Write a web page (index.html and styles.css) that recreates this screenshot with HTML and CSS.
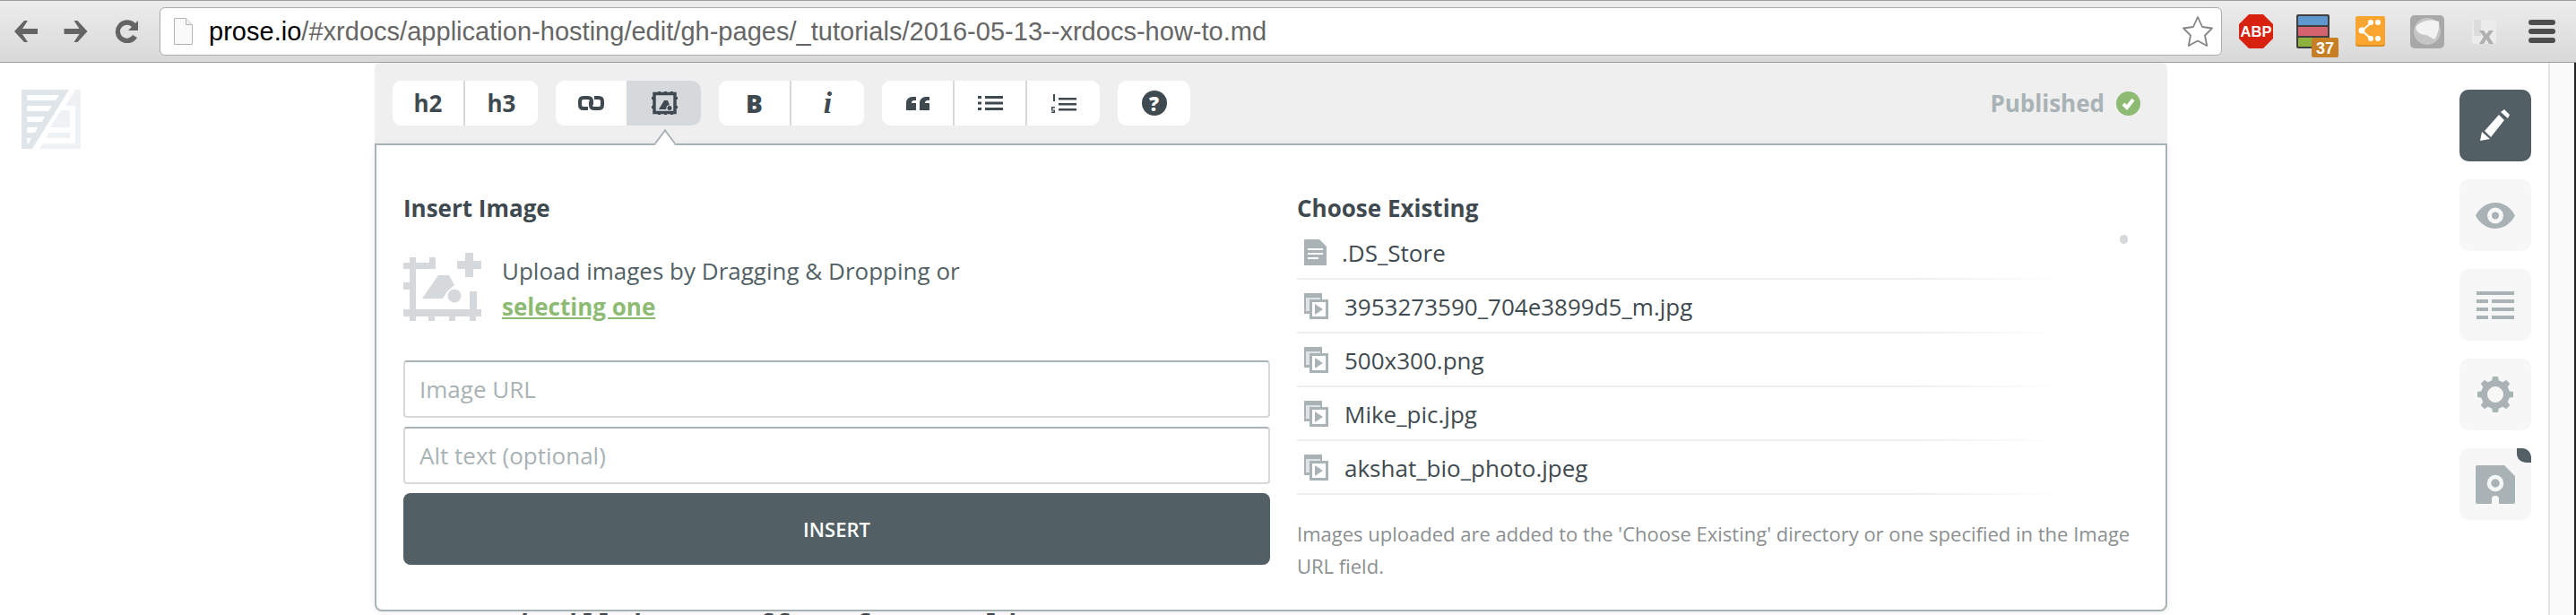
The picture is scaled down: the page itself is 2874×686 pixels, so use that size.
FILE: index.html
```html
<!DOCTYPE html>
<html>
<head>
    <meta charset="UTF-8">
    <title>Prose</title>
    <link rel="stylesheet" href="styles.css">
</head>
<body>
    <header class="browser">
        <svg class="nav nav-back" viewBox="0 0 29 26"><path d="M13 1 2 13l11 12h4l-6-9h17v-6H11l6-9z"/></svg>
        <svg class="nav nav-forward" viewBox="0 0 29 26"><path d="M16 1l11 12-11 12h-4l6-9H1v-6h17l-6-9z"/></svg>
        <svg class="nav nav-reload" viewBox="0 0 27 26"><path d="M26 1v11H15l4-4a7.500 7.500 0 1 0 1 9l5 3a13 13 0 1 1-2-16z"/></svg>
        <div class="url">
            <svg class="url-page" viewBox="0 0 21 30"><path d="M.5.500h13l7 7v22H.5z" fill="#fafafa" stroke="#b5b5b5"/><path d="M13.500.500v7h7" fill="#eee" stroke="#b5b5b5"/></svg>
            <span class="url-text"><b>prose.io</b>/#xrdocs/application-hosting/edit/gh-pages/_tutorials/2016-05-13--xrdocs-how-to.md</span>
            <svg class="url-star" viewBox="0 0 36 36"><path d="M18 2l5 11 11 1.500-8 8 2.200 11.500L18 28.500 7.800 34 10 22.500l-8-8L13 13z" fill="#fff" stroke="#858585" stroke-width="1.800" stroke-linejoin="round"/></svg>
        </div>
        <svg class="ext ext-abp" viewBox="0 0 38 38"><path d="M11 0h16l11 11v16L27 38H11L0 27V11z" fill="#d8210f"/><text x="19" y="25" text-anchor="middle" class="abp-text">ABP</text></svg>
        <svg class="ext ext-buffer" viewBox="0 0 47 48">
            <rect x="0" y="0" width="37" height="38" rx="2" fill="#3f3f3f"/>
            <rect x="2" y="2" width="33" height="10" rx="1" fill="#5f97cf"/>
            <rect x="2" y="14" width="33" height="10" rx="1" fill="#d5626f"/>
            <rect x="2" y="26" width="33" height="10" rx="1" fill="#8eb13e"/>
            <rect x="17" y="26" width="30" height="22" rx="2" fill="#c67f25"/>
            <text x="32" y="44" text-anchor="middle" class="badge-text">37</text>
        </svg>
        <svg class="ext ext-share" viewBox="0 0 33 34">
            <rect width="33" height="34" rx="3" fill="#d98c25"/>
            <rect width="33" height="32" rx="3" fill="#fba531"/>
            <path d="M17 8 7 16l10 9" fill="none" stroke="#fff" stroke-width="2"/>
            <circle cx="7" cy="16" r="3.500" fill="#fff"/>
            <circle cx="17" cy="7" r="3" fill="#fff"/><circle cx="25" cy="7" r="3" fill="#fff"/>
            <circle cx="17" cy="25" r="3" fill="#fff"/><circle cx="25" cy="25" r="3" fill="#fff"/>
        </svg>
        <svg class="ext ext-gray" viewBox="0 0 38 37">
            <rect width="38" height="37" rx="5" fill="#a8a8a8"/>
            <circle cx="19" cy="18" r="15" fill="#c5c5c5"/>
            <path d="M6 14C9 7 22 3 32 7c1 6-1 15-5 20l-9-5C12 22 7 19 6 14z" fill="#f2f2f2"/>
        </svg>
        <svg class="ext ext-x" viewBox="0 0 27 27">
            <rect width="27" height="27" rx="2" fill="#ececec"/>
            <rect x="2" y="0" width="8" height="18" fill="#dcdcdc"/>
            <path d="M8 12h5l3 4 3-4h5l-5 7 5 8h-5l-3-5-3 5H8l5-8z" fill="#b0b0b0"/>
        </svg>
        <div class="menu"><span></span><span></span><span></span></div>
    </header>

    <div class="page">
        <div class="brand">
            <svg class="logo" viewBox="0 0 66 66">
                <path fill-rule="evenodd" fill="#dfe5e8" d="M0 0h53L12 66H0zM6 6v6h32l4-6zM6 18v6h24l4-6zM6 30v6h17l3-6zM6 42v6h9l3-6zM6 54v6h2l3-6z"/>
                <path fill="#eef2f4" d="M60 0h6v66H20l4-6h36V18H49zM44 23h10v19H32zM31 48h23v6H27z"/>
            </svg>
        </div>

        <main class="editor">
            <nav class="toolbar">
                <div class="btn-group">
                    <button class="tool">h2</button>
                    <button class="tool">h3</button>
                </div>
                <div class="btn-group">
                    <button class="tool">
                        <svg class="icon" width="29" height="16" viewBox="0 0 29 16"><path d="M11 14H6q-4 0-4-4V6q0-4 4-4h5q4 0 4 4v4M18 2h5q4 0 4 4v4q0 4-4 4h-5q-4 0-4-4V6" fill="none" stroke="#3f4a50" stroke-width="4"/></svg>
                    </button>
                    <button class="tool active">
                        <svg class="icon" width="31" height="26" viewBox="0 0 31 26">
                            <path d="M4 2.500h23v21H4z" fill="none" stroke="#3f4a50" stroke-width="3.500"/>
                            <path d="M1 6h3v3H1zM1 16h3v3H1zM27 6h3v3h-3zM27 16h3v3h-3zM8 0h3v2H8zM15 0h3v2h-3zM22 0h3v2h-3zM8 24h3v2H8zM15 24h3v2h-3zM22 24h3v2h-3z" fill="#3f4a50"/>
                            <path d="M9 20l6-10h4l2 5-3 1-1 4z" fill="#3f4a50"/><circle cx="21" cy="18.500" r="2.500" fill="#3f4a50"/>
                        </svg>
                    </button>
                </div>
                <div class="btn-group">
                    <button class="tool tool-b">B</button>
                    <button class="tool tool-i">i</button>
                </div>
                <div class="btn-group">
                    <button class="tool">
                        <svg class="icon" width="26" height="15" viewBox="0 0 26 15"><path d="M0 15V7c0-4 3-7 7-7h4v4H9C7 4 6 5 6 7h5v8zM15 15V7c0-4 3-7 7-7h4v4h-2c-2 0-3 1-3 3h5v8z" fill="#3f4a50"/></svg>
                    </button>
                    <button class="tool">
                        <svg class="icon" width="28" height="16" viewBox="0 0 28 16"><path d="M0 0h4v3H0zM8 0h20v3H8zM0 6.500h4v3H0zM8 6.500h20v3H8zM0 13h4v3H0zM8 13h20v3H8z" fill="#3f4a50"/></svg>
                    </button>
                    <button class="tool">
                        <svg class="icon" width="28" height="21" viewBox="0 0 28 21"><path d="M8 4h20v2.500H8zM8 10h20v2.500H8zM8 16h20v2.500H8z" fill="#3f4a50"/><path d="M2 0h2v8H2zM0 14h4v1.500H1.500v2H4V21H0v-1.500h2.500v-1H0z" fill="#3f4a50"/></svg>
                    </button>
                </div>
                <div class="btn-group">
                    <button class="tool tool-help"><span class="help">?</span></button>
                </div>
                <div class="status">
                    <span>Published</span>
                    <svg class="status-check" viewBox="0 0 27 27"><circle cx="13.500" cy="13.500" r="13.500" fill="#8dbb74"/><path d="M8 14l4 4 7-9" fill="none" stroke="#fff" stroke-width="4"/></svg>
                </div>
            </nav>

            <div class="arrow"></div>

            <section class="dialog">
                <div class="dialog-col">
                    <h3 class="dialog-title">Insert Image</h3>
                    <div class="upload">
                        <svg class="upload-icon" viewBox="0 0 87 76" fill="#d5d9db">
                            <path d="M0 11h7V5h7v6h15V5h7v13H14v15h-0v0h0v30h60V43h8v20h5v8h-6v5h-7v-5H58v5h-7v-5H35v5h-7v-5H14v5H7v-5H0v-8h7V41H0v-8h7V18H0z"/>
                            <path d="M21 51l18-26h12l6 11-8 7-5 8z"/>
                            <circle cx="57" cy="48" r="7.500"/>
                            <path d="M69 0h9v9h9v9h-9v9h-9v-9h-9V9h9z"/>
                        </svg>
                        <p class="upload-text">Upload images by Dragging &amp; Dropping or<br><a href="#">selecting one</a></p>
                    </div>
                    <input class="field" type="text" placeholder="Image URL">
                    <input class="field" type="text" placeholder="Alt text (optional)">
                    <button class="insert">INSERT</button>
                </div>
                <div class="dialog-col">
                    <h3 class="dialog-title">Choose Existing</h3>
                    <ul class="files">
                        <li class="file">
                            <svg class="file-doc" viewBox="0 0 25 29"><path d="M0 0h17l8 8v21H0z" fill="#a9b2b5"/><path d="M4 10h17v2H4zM4 15h17v2H4zM4 20h12v2H4z" fill="#fff"/></svg>
                            .DS_Store
                        </li>
                        <li class="file">
                            <svg class="file-media" viewBox="0 0 27 29"><path d="M0 0h20v23H0z" fill="#a9b2b5"/><path d="M2 5h16v15H2z" fill="#dfe3e5"/><path d="M6 7h21v22H6z" fill="#fff"/><path d="M6 7h21v22H6zM9 10v16h15V10z" fill="#a9b2b5" fill-rule="evenodd"/><path d="M12 12l9 6-9 6z" fill="#a9b2b5"/></svg>
                            3953273590_704e3899d5_m.jpg
                        </li>
                        <li class="file">
                            <svg class="file-media" viewBox="0 0 27 29"><path d="M0 0h20v23H0z" fill="#a9b2b5"/><path d="M2 5h16v15H2z" fill="#dfe3e5"/><path d="M6 7h21v22H6z" fill="#fff"/><path d="M6 7h21v22H6zM9 10v16h15V10z" fill="#a9b2b5" fill-rule="evenodd"/><path d="M12 12l9 6-9 6z" fill="#a9b2b5"/></svg>
                            500x300.png
                        </li>
                        <li class="file">
                            <svg class="file-media" viewBox="0 0 27 29"><path d="M0 0h20v23H0z" fill="#a9b2b5"/><path d="M2 5h16v15H2z" fill="#dfe3e5"/><path d="M6 7h21v22H6z" fill="#fff"/><path d="M6 7h21v22H6zM9 10v16h15V10z" fill="#a9b2b5" fill-rule="evenodd"/><path d="M12 12l9 6-9 6z" fill="#a9b2b5"/></svg>
                            Mike_pic.jpg
                        </li>
                        <li class="file">
                            <svg class="file-media" viewBox="0 0 27 29"><path d="M0 0h20v23H0z" fill="#a9b2b5"/><path d="M2 5h16v15H2z" fill="#dfe3e5"/><path d="M6 7h21v22H6z" fill="#fff"/><path d="M6 7h21v22H6zM9 10v16h15V10z" fill="#a9b2b5" fill-rule="evenodd"/><path d="M12 12l9 6-9 6z" fill="#a9b2b5"/></svg>
                            akshat_bio_photo.jpeg
                        </li>
                        <li class="scroll-thumb"></li>
                    </ul>
                    <p class="note">Images uploaded are added to the 'Choose Existing' directory or one specified in the Image URL field.</p>
                </div>
            </section>
            <p class="doc-line">our topi will in a me ff on for a told</p>
        </main>

        <aside class="side">
            <button class="side-btn active">
                <svg width="34" height="36" viewBox="0 0 34 36"><path d="M0 35l2-10 9 8zM5 24 21 6l6 6-15 19zM23 3l4-3 6 6-2 4z" fill="#fff"/></svg>
            </button>
            <button class="side-btn">
                <svg width="44" height="29" viewBox="0 0 44 29"><path d="M0 14.500C10-4.800 34-4.800 44 14.500 34 33.800 10 33.800 0 14.500z" fill="#a9b2b5"/><circle cx="22" cy="14.500" r="6.500" fill="none" stroke="#f7f7f7" stroke-width="5"/></svg>
            </button>
            <button class="side-btn">
                <svg width="42" height="31" viewBox="0 0 42 31"><path d="M0 0h42v4H0zM0 9h13v4H0zM17 9h25v4H17zM0 18h13v4H0zM17 18h25v4H17zM0 27h13v4H0zM17 27h25v4H17z" fill="#a9b2b5"/></svg>
            </button>
            <button class="side-btn">
                <svg width="40" height="40" viewBox="0 0 40 40">
                    <circle cx="20" cy="20" r="12.500" fill="none" stroke="#a9b2b5" stroke-width="7"/>
                    <g fill="#a9b2b5">
                        <path d="M17 0h6l1 6h-8z"/>
                        <path d="M17 0h6l1 6h-8z" transform="rotate(45 20 20)"/>
                        <path d="M17 0h6l1 6h-8z" transform="rotate(90 20 20)"/>
                        <path d="M17 0h6l1 6h-8z" transform="rotate(135 20 20)"/>
                        <path d="M17 0h6l1 6h-8z" transform="rotate(180 20 20)"/>
                        <path d="M17 0h6l1 6h-8z" transform="rotate(225 20 20)"/>
                        <path d="M17 0h6l1 6h-8z" transform="rotate(270 20 20)"/>
                        <path d="M17 0h6l1 6h-8z" transform="rotate(315 20 20)"/>
                    </g>
                </svg>
            </button>
            <button class="side-btn">
                <span class="side-dot"></span>
                <svg width="44" height="43" viewBox="0 0 44 43"><path d="M2 0h30l12 12v29q0 2-2 2H26v-6q0-3-4-3t-4 3v6H2q-2 0-2-2V2q0-2 2-2z" fill="#a9b2b5"/><circle cx="22" cy="20" r="7" fill="none" stroke="#f7f7f7" stroke-width="4.500"/></svg>
            </button>
        </aside>
        <div class="rail"></div>
    </div>
</body>
</html>
```

FILE: styles.css
```css
* {
    box-sizing: border-box;
}
html, body {
    height: 686px;
    margin: 0;
    overflow: hidden;
}
body {
    background-color: #fff;
    color: #525f65;
    font-family: "Open Sans", sans-serif;
}
button {
    border: 0;
    font-family: inherit;
    padding: 0;
}

/* browser bar */
.browser {
    align-items: center;
    background: linear-gradient(#ececec, #d9d9d9);
    border-bottom: 1px solid #9c9c9c;
    border-top: 1px solid #9c9c9c;
    display: flex;
    height: 70px;
    padding-left: 14px;
}
.nav {
    fill: #646464;
    height: 26px;
}
.nav-back {
    width: 29px;
}
.nav-forward {
    margin-left: 27px;
    width: 30px;
}
.nav-reload {
    margin-left: 28px;
    width: 27px;
}
.url {
    align-items: center;
    background-color: #fff;
    border: 1px solid #ababab;
    border-radius: 6px;
    display: flex;
    height: 54px;
    margin-left: 23px;
    padding: 0 8px 0 15px;
    width: 2301px;
}
.url-page {
    flex: none;
    height: 30px;
    width: 21px;
}
.url-text {
    color: #666;
    flex: 1;
    font-family: "Liberation Sans", Arial, sans-serif;
    font-size: 29px;
    letter-spacing: .02px;
    margin-left: 18px;
}
.url-text b {
    color: #000;
    font-weight: 400;
}
.url-star {
    flex: none;
    height: 36px;
    width: 36px;
}
.ext {
    flex: none;
}
.ext-abp {
    height: 38px;
    margin-left: 19px;
    width: 38px;
}
.abp-text {
    fill: #fff;
    font-family: "Liberation Sans", sans-serif;
    font-size: 16.5px;
    font-weight: 700;
}
.ext-buffer {
    height: 48px;
    margin-left: 26px;
    margin-top: 10px;
    width: 47px;
}
.badge-text {
    fill: #fff;
    font-family: "Liberation Sans", sans-serif;
    font-size: 18px;
    font-weight: 700;
}
.ext-share {
    height: 34px;
    margin-left: 19px;
    width: 33px;
}
.ext-gray {
    height: 37px;
    margin-left: 28px;
    width: 38px;
}
.ext-x {
    height: 27px;
    margin-left: 31px;
    width: 27px;
}
.menu {
    display: flex;
    flex-direction: column;
    gap: 4px;
    margin-left: 36px;
    width: 30px;
}
.menu span {
    background-color: #4d4d4d;
    border-radius: 3px;
    height: 6px;
}

/* page */
.page {
    display: flex;
    height: 616px;
}
.brand {
    flex: none;
    padding: 30px 0 0 24px;
    width: 418px;
}
.logo {
    display: block;
    height: 66px;
    width: 66px;
}
.editor {
    flex: none;
    position: relative;
    width: 2000px;
}
.doc-line {
    color: #3f4a50;
    font-family: "Liberation Mono", monospace;
    font-size: 30px;
    font-weight: 700;
    line-height: 34px;
    margin: 0 0 0 32px;
}

/* toolbar */
.toolbar {
    align-items: center;
    background-color: #efefef;
    border-radius: 6px 6px 0 0;
    display: flex;
    gap: 20px;
    height: 90px;
    padding: 0 30px 0 20px;
}
.btn-group {
    background-color: #fff;
    border-radius: 10px;
    display: flex;
    height: 50px;
    overflow: hidden;
}
.tool {
    align-items: center;
    background-color: #fff;
    border-right: 2px solid #d5d9db;
    color: #3f4a50;
    display: flex;
    font-size: 26px;
    font-weight: 700;
    height: 50px;
    justify-content: center;
    width: 81px;
}
.tool:last-child {
    border-right: 0;
    width: 81px;
}
.tool.active {
    background-color: #d5d9db;
}
.tool-b {
    font-size: 28px;
    font-weight: 800;
}
.tool-i {
    font-family: "Liberation Serif", serif;
    font-size: 34px;
    font-style: italic;
}
.tool-help {
    width: 80px;
}
.help {
    background-color: #3f4a50;
    border-radius: 50%;
    color: #fff;
    font-size: 22px;
    font-weight: 800;
    height: 28px;
    line-height: 28px;
    text-align: center;
    width: 28px;
}
.status {
    align-items: center;
    color: #a9b2b5;
    display: flex;
    font-size: 26px;
    font-weight: 700;
    gap: 13px;
    margin-left: auto;
}
.status-check {
    height: 27px;
    width: 27px;
}
.arrow {
    background-color: #fff;
    border-left: 2px solid #a9b2b5;
    border-top: 2px solid #a9b2b5;
    height: 20px;
    left: 314px;
    position: absolute;
    top: 80px;
    transform: rotate(45deg) skew(8deg, 8deg);
    width: 20px;
    z-index: 2;
}

/* dialog */
.dialog {
    background-color: #fff;
    border: 2px solid #a9b2b5;
    border-radius: 0 0 8px 8px;
    box-shadow: 0 2px 8px rgba(0, 0, 0, .07);
    display: grid;
    gap: 30px;
    grid-template-columns: 967px 937px;
    height: 522px;
    margin-bottom: -1px;
    padding: 55px 30px 0;
    position: relative;
    z-index: 1;
}
.dialog-col {
    display: flex;
    flex-direction: column;
    min-width: 0;
}
.dialog-title {
    color: #3f4a50;
    font-size: 26px;
    font-weight: 700;
    line-height: 30px;
    margin: 0;
}
.upload {
    display: flex;
    gap: 23px;
    height: 80px;
    margin: 35px 0 40px;
}
.upload-icon {
    flex: none;
    height: 76px;
    width: 87px;
}
.upload-text {
    font-size: 26px;
    line-height: 40px;
    margin: 0;
}
.upload-text a {
    color: #8dbb74;
    font-weight: 700;
}
.field {
    background-color: #fff;
    border: 2px solid #d5d9db;
    border-radius: 4px;
    border-top-color: #a9b2b5;
    color: #525f65;
    font-family: inherit;
    font-size: 26px;
    height: 64px;
    margin-bottom: 10px;
    outline: 0;
    padding: 0 16px;
    width: 100%;
}
.field::placeholder {
    color: #a9b2b5;
    opacity: 1;
}
.insert {
    background-color: #525f65;
    border-radius: 8px;
    color: #fff;
    font-size: 22px;
    font-weight: 600;
    height: 80px;
    width: 100%;
}

/* file list */
.files {
    list-style: none;
    margin: 5px 0 0;
    padding: 0;
    position: relative;
}
.file {
    align-items: center;
    color: #3f4a50;
    display: flex;
    font-size: 26px;
    height: 60px;
    padding: 0 0 0 8px;
    position: relative;
    width: 855px;
}
.file::after {
    background: linear-gradient(to right, #eee 80%, rgba(238, 238, 238, 0));
    bottom: 0;
    content: "";
    height: 2px;
    left: 0;
    position: absolute;
    right: 0;
}
.file-doc {
    flex: none;
    height: 29px;
    margin: -2px 17px 0 0;
    width: 25px;
}
.file-media {
    flex: none;
    height: 29px;
    margin: -2px 18px 0 0;
    width: 27px;
}
.scroll-thumb {
    background-color: #d5d9db;
    border-radius: 5px;
    height: 10px;
    left: 918px;
    position: absolute;
    top: 10px;
    width: 9px;
}
.note {
    color: #8b8f91;
    font-size: 22px;
    line-height: 36px;
    margin: 25px 0 0;
}

/* sidebar */
.side {
    border-right: 2px solid #e5e5e5;
    display: flex;
    flex: none;
    flex-direction: column;
    gap: 20px;
    padding: 30px 0 0 326px;
    width: 427px;
}
.side-btn {
    align-items: center;
    background-color: #f7f7f7;
    border-radius: 10px;
    display: flex;
    height: 80px;
    justify-content: center;
    position: relative;
    width: 80px;
}
.side-btn.active {
    background-color: #525f65;
}
.side-dot {
    background-color: #525f65;
    border-radius: 0 10px 0 10px;
    height: 16px;
    position: absolute;
    right: 0;
    top: 0;
    width: 16px;
}
.rail {
    background-color: #fafafa;
    border-right: 2px solid #222;
    flex: 1;
}
```
